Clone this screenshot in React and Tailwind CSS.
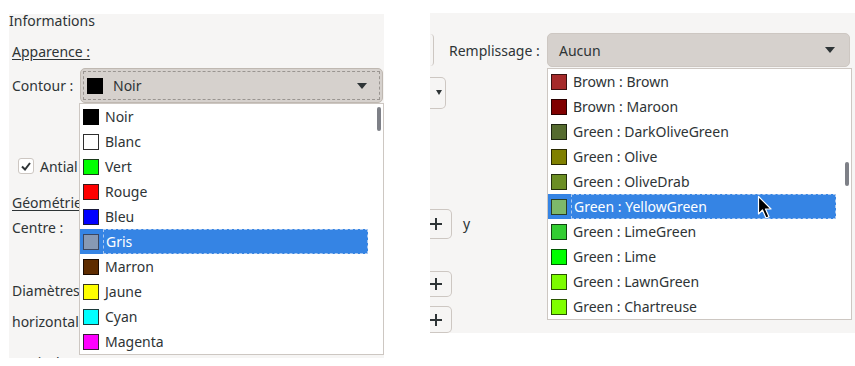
import React from 'react';

const leftColors = [
  { name: 'Noir', color: '#000000', edge: '#000000' },
  { name: 'Blanc', color: '#ffffff', edge: '#2e2e2e' },
  { name: 'Vert', color: '#00ff00', edge: '#1a3a1a' },
  { name: 'Rouge', color: '#ff0000', edge: '#3a1a1a' },
  { name: 'Bleu', color: '#0000ff', edge: '#1a1a3a' },
  { name: 'Gris', color: '#8799b4', edge: '#3a4660', selected: true },
  { name: 'Marron', color: '#5e2c00', edge: '#1a0a00' },
  { name: 'Jaune', color: '#ffff00', edge: '#3a3a1a' },
  { name: 'Cyan', color: '#00ffff', edge: '#1a3a3a' },
  { name: 'Magenta', color: '#ff00ff', edge: '#3a1a3a' },
];

const rightColors = [
  { name: 'Brown : Brown', color: '#a52a2a', edge: '#3a1010' },
  { name: 'Brown : Maroon', color: '#800000', edge: '#2a0000' },
  { name: 'Green : DarkOliveGreen', color: '#556b2f', edge: '#1c2410' },
  { name: 'Green : Olive', color: '#808000', edge: '#2a2a00' },
  { name: 'Green : OliveDrab', color: '#6b8e23', edge: '#24300c' },
  { name: 'Green : YellowGreen', color: '#7db96a', edge: '#2a3e24', selected: true },
  { name: 'Green : LimeGreen', color: '#32cd32', edge: '#104410' },
  { name: 'Green : Lime', color: '#00ff00', edge: '#005500' },
  { name: 'Green : LawnGreen', color: '#7cfc00', edge: '#2a5400' },
  { name: 'Green : Chartreuse', color: '#7fff00', edge: '#2a5500' },
];

const Arrow = () => (
  <svg width="10" height="6" viewBox="0 0 10 6" className="text-[#2e3436]">
    <path d="M0 0 L10 0 L5 6 Z" fill="currentColor" />
  </svg>
);

const Plus = () => (
  <svg width="12" height="12" viewBox="0 0 12 12">
    <path d="M6 0 V12 M0 6 H12" stroke="#2e3436" strokeWidth="2" />
  </svg>
);

const ColorRow = ({ item }) => (
  <div
    className={`flex h-[25px] items-center ${item.selected ? 'bg-[#3584e4] text-white w-[288px]' : 'text-[#2e3436]'}`}
  >
    <span
      className="ml-[3px] h-[16px] w-[16px] shrink-0 border"
      style={{ backgroundColor: item.color, borderColor: item.edge }}
    />
    <span
      className={`ml-[4px] flex h-full flex-1 items-center pl-[2px] ${item.selected ? 'border border-dashed border-[#a9c8f0]' : ''}`}
    >
      {item.name}
    </span>
  </div>
);

const DropList = ({ items, thumbTop, className }) => (
  <div className={`absolute h-[252px] w-[305px] border border-[#cdc7c2] bg-white ${className}`}>
    {items.map((item) => (
      <ColorRow key={item.name} item={item} />
    ))}
    <div
      className="absolute right-[2px] h-[24px] w-[4px] rounded-full bg-[#7e8087]"
      style={{ top: thumbTop }}
    />
  </div>
);

const Cursor = () => (
  <svg width="18" height="25" viewBox="0 0 18 25" className="absolute left-[327px] top-[182px]">
    <path d="M1.5 1.5 L1.5 19 L5.5 15 L9 23 L12 21.8 L8.5 14 L14 14 Z" fill="#000" stroke="#fff" strokeWidth="1.2" strokeLinejoin="round" />
  </svg>
);

export default function App() {
  return (
    <div className="flex h-[366px] w-[855px] bg-white font-['Noto_Sans',sans-serif] text-[14px] text-[#2e3436]">
      {/* left screenshot */}
      <div className="relative ml-[9px] mt-[14px] flex h-[344px] w-[375px] flex-col bg-[#f6f5f4]">
        <div className="h-[14px] leading-[14px]">Informations</div>
        <div className="mt-[14px] h-[20px] pl-[3px] leading-[20px] underline underline-offset-2">Apparence :</div>
        <div className="mt-[6px] flex h-[35px] items-center pl-[3px]">
          <span className="w-[68px]">Contour :</span>
          <div className="flex h-[35px] w-[303px] items-center rounded-[5px] border border-[#bfb8b1] bg-[#d6d1cd] p-[2px]">
            <div className="flex h-full w-full items-center border border-dashed border-[#9a9591] pl-[3px] pr-[12px]">
              <span className="h-[16px] w-[16px] bg-black" />
              <span className="ml-[10px] flex-1">Noir</span>
              <Arrow />
            </div>
          </div>
        </div>
        <div className="mt-[53px] flex h-[20px] items-center pl-[9px]">
          <span className="flex h-[16px] w-[16px] items-center justify-center rounded-[3px] border border-[#cdc7c2] bg-white">
            <svg width="10" height="9" viewBox="0 0 10 9">
              <path d="M1 4.5 L4 7.5 L9 1" fill="none" stroke="#2e3436" strokeWidth="2" />
            </svg>
          </span>
          <span className="ml-[6px] whitespace-nowrap">Antial</span>
        </div>
        <div className="mt-[17px] h-[20px] pl-[3px] leading-[20px] underline underline-offset-2">Géométrie :</div>
        <div className="mt-[5px] h-[20px] pl-[3px] leading-[20px]">Centre :</div>
        <div className="mt-[43px] h-[20px] pl-[3px] leading-[20px]">Diamètres :</div>
        <div className="mt-[11px] h-[20px] pl-[3px] leading-[20px]">horizontal :</div>
        <div className="mt-[21px] h-[5px] overflow-hidden pl-[3px] leading-[20px]">vertical :</div>

        <DropList items={leftColors} thumbTop={3} className="left-[70px] top-[89px]" />
      </div>

      {/* right screenshot */}
      <div className="relative ml-[46px] mt-[13px] flex h-[320px] w-[425px] flex-col overflow-hidden bg-[#f6f5f4]">
        <div className="mt-[20px] flex h-[34px] items-center">
          <div className="h-[32px] w-[4px] rounded-r-[5px] border-r border-[#cdc7c2] bg-[#f6f5f4]" />
          <span className="ml-[15px]">Remplissage :</span>
          <div className="ml-auto mr-[5px] flex h-[34px] w-[303px] items-center rounded-[5px] border border-[#cdc7c2] bg-[#d6d1cd] pl-[11px] pr-[14px]">
            <span className="flex-1">Aucun</span>
            <Arrow />
          </div>
        </div>
        <div className="mt-[10px] flex h-[33px] w-[16px] items-center justify-end rounded-r-[5px] border border-l-0 border-[#cdc7c2] bg-[#f6f5f4] pr-[3px]">
          <svg width="6" height="5" viewBox="0 0 6 5"><path d="M0 0 L6 0 L3 5 Z" fill="#2e3436" /></svg>
        </div>
        <div className="mt-[100px] flex h-[30px] items-center">
          <div className="flex h-[30px] w-[22px] items-center rounded-r-[5px] border border-l-0 border-[#cdc7c2]">
            <Plus />
          </div>
          <span className="ml-[11px]">y</span>
        </div>
        <div className="mt-[32px] flex h-[28px] w-[22px] items-center rounded-r-[5px] border border-l-0 border-[#cdc7c2]">
          <Plus />
        </div>
        <div className="mt-[9px] flex h-[28px] w-[22px] items-center rounded-r-[5px] border border-l-0 border-[#cdc7c2]">
          <Plus />
        </div>

        <DropList items={rightColors} thumbTop={93} className="left-[117px] top-[55px]" />
        <Cursor />
      </div>
    </div>
  );
}
